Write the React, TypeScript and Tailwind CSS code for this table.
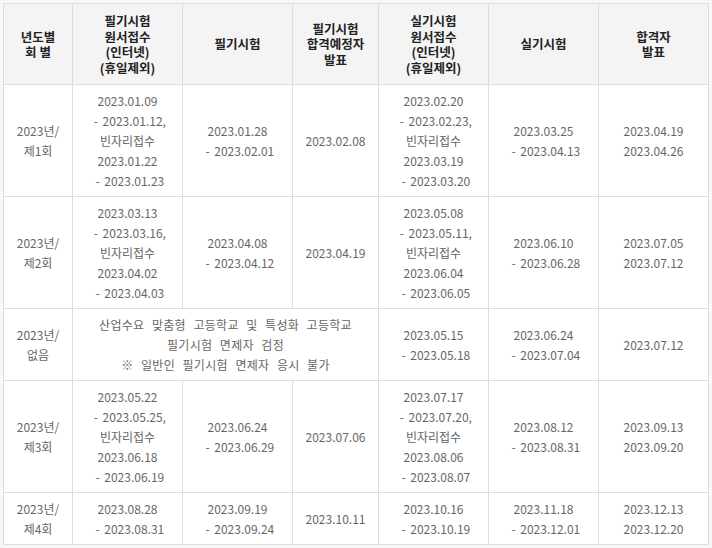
import React from "react";

const font = { fontFamily: '"Noto Sans CJK KR", "Noto Sans", sans-serif' };

type Cell = { lines: string[]; colSpan?: number };

const rows: Cell[][] = [
  [
    { lines: ["2023년/", "제1회"] },
    { lines: ["2023.01.09", " - 2023.01.12,", "빈자리접수", "2023.01.22", " - 2023.01.23"] },
    { lines: ["2023.01.28", " - 2023.02.01"] },
    { lines: ["2023.02.08"] },
    { lines: ["2023.02.20", " - 2023.02.23,", "빈자리접수", "2023.03.19", " - 2023.03.20"] },
    { lines: ["2023.03.25", " - 2023.04.13"] },
    { lines: ["2023.04.19", "2023.04.26"] },
  ],
  [
    { lines: ["2023년/", "제2회"] },
    { lines: ["2023.03.13", " - 2023.03.16,", "빈자리접수", "2023.04.02", " - 2023.04.03"] },
    { lines: ["2023.04.08", " - 2023.04.12"] },
    { lines: ["2023.04.19"] },
    { lines: ["2023.05.08", " - 2023.05.11,", "빈자리접수", "2023.06.04", " - 2023.06.05"] },
    { lines: ["2023.06.10", " - 2023.06.28"] },
    { lines: ["2023.07.05", "2023.07.12"] },
  ],
  [
    { lines: ["2023년/", "없음"] },
    {
      lines: [
        "산업수요 맞춤형 고등학교 및 특성화 고등학교",
        "필기시험 면제자 검정",
        "※ 일반인 필기시험 면제자 응시 불가",
      ],
      colSpan: 3,
    },
    { lines: ["2023.05.15", " - 2023.05.18"] },
    { lines: ["2023.06.24", " - 2023.07.04"] },
    { lines: ["2023.07.12"] },
  ],
  [
    { lines: ["2023년/", "제3회"] },
    { lines: ["2023.05.22", " - 2023.05.25,", "빈자리접수", "2023.06.18", " - 2023.06.19"] },
    { lines: ["2023.06.24", " - 2023.06.29"] },
    { lines: ["2023.07.06"] },
    { lines: ["2023.07.17", " - 2023.07.20,", "빈자리접수", "2023.08.06", " - 2023.08.07"] },
    { lines: ["2023.08.12", " - 2023.08.31"] },
    { lines: ["2023.09.13", "2023.09.20"] },
  ],
  [
    { lines: ["2023년/", "제4회"] },
    { lines: ["2023.08.28", " - 2023.08.31"] },
    { lines: ["2023.09.19", " - 2023.09.24"] },
    { lines: ["2023.10.11"] },
    { lines: ["2023.10.16", " - 2023.10.19"] },
    { lines: ["2023.11.18", " - 2023.12.01"] },
    { lines: ["2023.12.13", "2023.12.20"] },
  ],
];

const headers = [
  ["년도별", "회 별"],
  ["필기시험", "원서접수", "(인터넷)", "(휴일제외)"],
  ["필기시험"],
  ["필기시험", "합격예정자", "발표"],
  ["실기시험", "원서접수", "(인터넷)", "(휴일제외)"],
  ["실기시험"],
  ["합격자", "발표"],
];

const widths = [69, 110, 110, 86, 110, 110, 110];

export default function App() {
  return (
    <div className="w-[712px] h-[548px] bg-[#f8f8f8] pt-[3px] pl-[3px]" style={font}>
      <table className="table-fixed border-collapse bg-white w-[706px]">
        <colgroup>
          {widths.map((w, i) => (
            <col key={i} style={{ width: w }} />
          ))}
        </colgroup>
        <thead>
          <tr>
            {headers.map((h, i) => (
              <th
                key={i}
                className="border border-[#dddddd] bg-[#f4f4f4] py-[9px] px-1 text-center align-middle text-[12.5px] leading-[15.5px] font-bold text-[#222]"
              >
                {h.map((l, j) => (
                  <div key={j}>{l}</div>
                ))}
              </th>
            ))}
          </tr>
        </thead>
        <tbody>
          {rows.map((r, i) => (
            <tr key={i}>
              {r.map((c, j) => (
                <td
                  key={j}
                  colSpan={c.colSpan}
                  className={
                    c.colSpan
                      ? "border border-[#dddddd] pt-[6px] pb-[5px] px-1 text-center align-middle text-[12px] leading-[20px] text-[#666] whitespace-pre [word-spacing:4.5px] tracking-[0.3px]"
                      : "border border-[#dddddd] pt-[6px] pb-[5px] px-1 text-center align-middle text-[12px] leading-[20px] text-[#666] whitespace-pre [word-spacing:2px]"
                  }
                >
                  {c.lines.map((l, k) => (
                    <div key={k}>{l}</div>
                  ))}
                </td>
              ))}
            </tr>
          ))}
        </tbody>
      </table>
    </div>
  );
}
